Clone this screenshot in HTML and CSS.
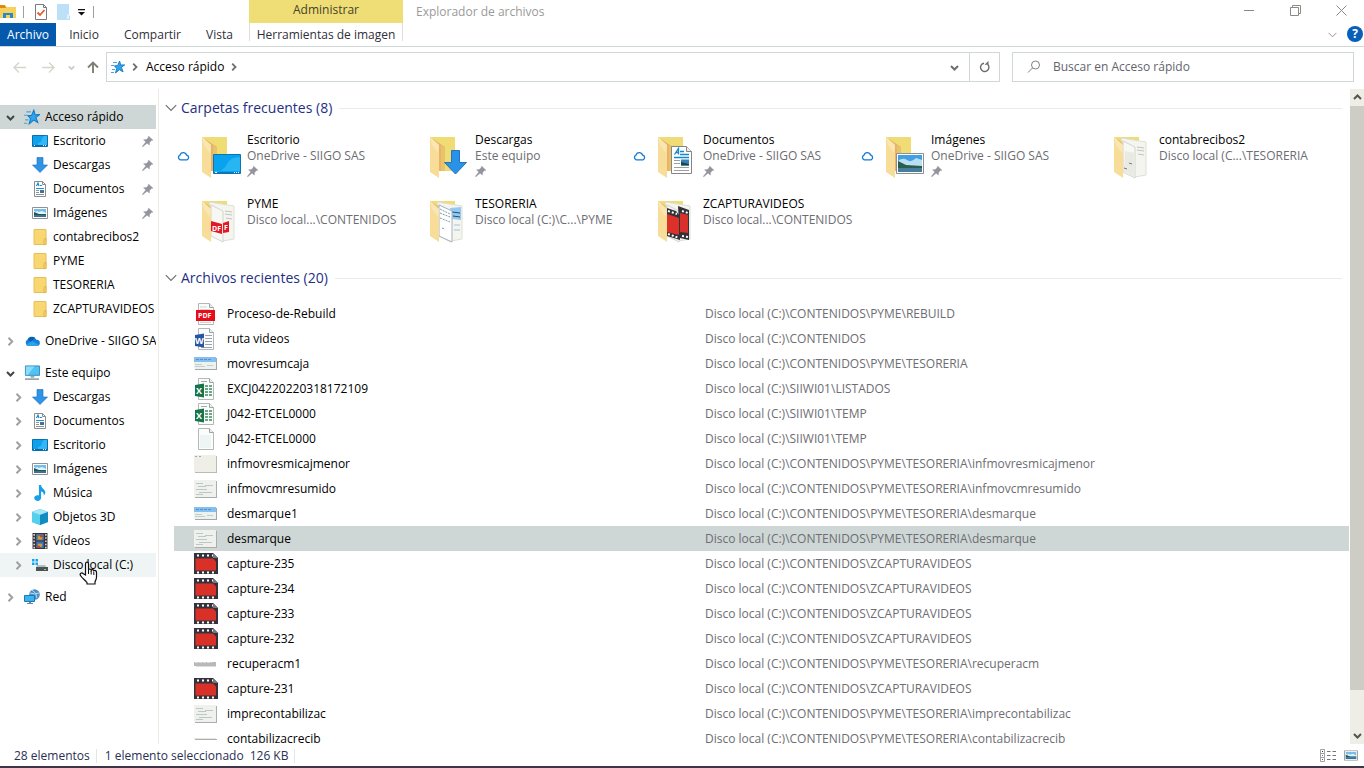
FILE: index.html
```html
<!DOCTYPE html>
<html lang="es">
<head>
<meta charset="utf-8">
<title>Explorador de archivos</title>
<link rel="stylesheet" href="styles.css">
</head>
<body>
<svg class="sprite" aria-hidden="true">
  <symbol id="star" viewBox="0 0 14 14"><path d="M8.600 1l1.100 4 4-.1-3.300 2.400 1.700 4.600-3.600-2.200-4 3.300 1.200-4.600-2.300-2.500 3.300-.4z" fill="#2aa5ee" stroke="#1477c4" stroke-width=".9"/><path d="M2 2.500h4M0 5.500h3M1 9.500h3M0 12.500h3" stroke="#4aa3dc"/></symbol>
  <symbol id="down" viewBox="0 0 9 9"><path d="M1 3l3.500 3.500L8 3" fill="none" stroke="currentColor" stroke-width="2"/></symbol>
  <symbol id="thin-down" viewBox="0 0 12 8"><path d="M.8 1.200L6 6.400l5.200-5.200" fill="none" stroke="currentColor" stroke-width="1.200"/></symbol>
  <symbol id="right" viewBox="0 0 9 9"><path d="M2.500.800l3.700 3.700-3.700 3.700" fill="none" stroke="currentColor" stroke-width="2"/></symbol>
  <symbol id="pin" viewBox="0 0 11 11"><path d="M6.500 0L11 4.300l-1.600.3-1.800 2-.2 2.500L5 7.200.8 10.800l-.6-.4L3.800 6 1.500 3.800l2.700-.2 2-1.900z" fill="#94949f" stroke="#94949f" stroke-width=".4"/></symbol>
  <symbol id="desktop" viewBox="0 0 16 12"><path d="M.5.5h15v11H.500z" fill="#0da1ee" stroke="#0b6fae"/><path d="M6 8q3 0 4-4t5-3v9H6z" fill="#33b7f5"/><path d="M1 10.500h14" stroke="#0866a3"/><path d="M2 10.500h1M11 10.500h1M13 10.500h1" stroke="#fff"/></symbol>
  <symbol id="arrow" viewBox="0 0 16 16"><path d="M5 .5h6V8h4.500L8 15.500.500 8H5z" fill="#2f93e6" stroke="#2875c0" stroke-width=".7"/></symbol>
  <symbol id="doc" viewBox="0 0 12 16"><path d="M.5.5h8l3 3v12H.500z" fill="#fff" stroke="#8c8c8c"/><path d="M8.500.5v3h3" fill="none" stroke="#8c8c8c"/><path d="M2.500 5L4 2l1 3M6 4.500h2M2 7.500h8" fill="none" stroke="#1c8cd2" stroke-width="1.200"/><path d="M2 9.500h3M2 11.500h3M2 13.500h8" stroke="#8a9298"/><path d="M6 9h4v3H6z" fill="#47728f"/></symbol>
  <symbol id="image" viewBox="0 0 16 12"><path d="M.5.5h15v11H.500z" fill="#fff" stroke="#919191"/><path d="M2 2h12v8H2z" fill="#78bce9"/><path d="M2 4l2 1 1-1 2 1 3-1 4 2v1H2z" fill="#e4f4fb"/><path d="M2 5l5 2h7v1H2z" fill="#24594f"/><path d="M2 8h12v2H2z" fill="#3a719c"/></symbol>
  <symbol id="folder" viewBox="0 0 13 16"><path d="M.5.500h12v15H.500z" fill="#f8d670" stroke="#e7c05b"/><path d="M10.500 15.500v-5l2-1.500v6.500z" fill="#f9df8c" stroke="#dfb13e"/></symbol>
  <symbol id="cloud-solid" viewBox="0 0 16 10"><path d="M4 10a3.500 3.500 0 0 1-.3-6.500A5 5 0 0 1 12.500 3.800 3 3 0 0 1 13 10z" fill="#1680d8"/><path d="M3.500 3.500A5 5 0 0 1 11 1.700L7 6z" fill="#0b5fae"/><path d="M2 9l6-4 7 4-2 1H4z" fill="#2ba3ec"/></symbol>
  <symbol id="pc" viewBox="0 0 17 16"><path d="M1.500.500h15v10h-15z" fill="#4dc3f6" stroke="#3b86b5"/><path d="M2 1h9L4 10H2z" fill="#8bdcfb"/><path d="M7 11h4v2H7z" fill="#92a9b6"/><path d="M1 14.500h15" stroke="#7f919c" stroke-width="1.500"/></symbol>
  <symbol id="music" viewBox="0 0 12 15"><path d="M5 0h2c0 3 4 4 4 7 0 1-.5 2-1.500 3C10 7 8 6 7 6v6a3.200 2.700 0 1 1-2-2.300z" fill="#18a0e6"/></symbol>
  <symbol id="cube" viewBox="0 0 16 16"><path d="M0 3l8-3 8 3v10l-8 3-8-3z" fill="#1ab0dc"/><path d="M0 3l8 3v10l-8-3z" fill="#54d0ec"/><path d="M0 3l8-3 8 3-8 3z" fill="#a4e6f5"/><path d="M8 6l8-3v10l-8 3z" fill="#128cc0"/></symbol>
  <symbol id="video" viewBox="0 0 14 15"><path d="M0 0h14v15H0z" fill="#34343a"/><path d="M3.500 1h7v6h-7z" fill="#56799c"/><path d="M3.500 8h7v6h-7z" fill="#3a75bc"/><path d="M5 3h4v3H5zM5 10h4v3H5z" fill="#d99b34"/><path d="M7 2h3v2H7zM4 12h3v2H4z" fill="#b04738"/><path d="M1.500 1v14M12.500 1v14" stroke="#fff" stroke-width="1.200" stroke-dasharray="1.500 1.500"/></symbol>
  <symbol id="disk" viewBox="0 0 16 14"><path d="M0 1h2.500v2.500H0zM3.500 1H6v2.500H3.500zM0 4.500h2.500V7H0zM3.500 4.500H6V7H3.500z" fill="#15a3ef"/><path d="M5 7h8l2 3H4z" fill="#b8bdc0"/><path d="M4 9h12v4H4z" fill="#4c5256"/><path d="M12 11.500h2" stroke="#69e070"/></symbol>
  <symbol id="net" viewBox="0 0 16 16"><circle cx="10.500" cy="5.500" r="5.300" fill="#4d8ec6"/><path d="M8 1q5 3 5 8M6 4q5 2 9 0" stroke="#b9dcf0" fill="none"/><path d="M.500 6.500h10v6H.500z" fill="#38b4f0" stroke="#2178b1"/><path d="M5 13h2v1h2v1H3v-1h2z" fill="#6c8798"/></symbol>
  <symbol id="cloud" viewBox="0 0 13 10"><path d="M3.200 8.800a2.500 2.500 0 0 1-.2-4.700A3.400 3.400 0 0 1 9.500 4a2.500 2.500 0 0 1 .5 4.800z" fill="#fff" stroke="#1179d6" stroke-width="1.300"/></symbol>
  <symbol id="folder-back" viewBox="0 0 40 44"><path d="M0 1h25v34H8z" fill="#efdc75"/><path d="M3 3l12 8v24H8z" fill="#eab266"/><path d="M11 9l4 3v23h-4z" fill="#e8c36c"/></symbol>
  <symbol id="folder-front" viewBox="0 0 40 44"><path d="M0 1l9 8v33l-9-6z" fill="#f8dd98"/><path d="M0 1l9 8-1 8L2 9z" fill="#fae6b2"/></symbol>
  <symbol id="big-plain" viewBox="0 0 40 44"><use href="#folder-back" width="40" height="44"/><use href="#folder-front" width="40" height="44"/></symbol>
  <symbol id="big-desktop" viewBox="0 0 40 44"><use href="#big-plain" width="40" height="44"/><path d="M11.500 18.500h27v19h-27z" fill="#08a2ef" stroke="#0b75b3"/><path d="M12 37q10-2 13-9t13-7v14H12z" fill="#27b5f3"/><path d="M12 36.500h26" stroke="#0a79b8"/><path d="M13 36.500h2M32 36.500h1M34 36.500h1M36 36.500h1" stroke="#fff"/></symbol>
  <symbol id="big-down" viewBox="0 0 40 44"><use href="#big-plain" width="40" height="44"/><path d="M21.500 14.500h8v12h7L25.500 38l-11-11.500h7z" fill="#2892e8" stroke="#2373bd"/></symbol>
  <symbol id="big-doc" viewBox="0 0 40 44"><use href="#big-plain" width="40" height="44"/><path d="M13.500 10.500h15l5 5v22h-20z" fill="#fff" stroke="#858585"/><path d="M28.500 10.500v5h5" fill="#eee" stroke="#858585"/><path d="M16.500 18.500l4-6v6m-3-2h3M22 15.500h4M22 18.500h9M16 21.500h15" fill="none" stroke="#1488cf" stroke-width="1.300"/><path d="M16 24.500h6M16 27.500h6M16 31.500h15M16 34.500h15" stroke="#9ba0a3"/><path d="M23 23.500h8v6h-8z" fill="#3a80bd"/><path d="M23 26l8 2v1.500h-8z" fill="#1b4843"/></symbol>
  <symbol id="big-image" viewBox="0 0 40 44"><use href="#big-plain" width="40" height="44"/><path d="M10.500 17.500h27v20h-27z" fill="#fff" stroke="#8c9092"/><path d="M12 19h24v17H12z" fill="#429fe3"/><path d="M12 25q5-4 9-1t9-2l6 2v6H12z" fill="#b9e0f2"/><path d="M12 25l8 4 16 1v2H12z" fill="#2b5d4b"/><path d="M12 32h24v4H12z" fill="#477e9d"/></symbol>
  <symbol id="pages" viewBox="0 0 40 44"><path d="M7 2l25 4v33l-11 2z" fill="#f5f5f0" stroke="#dedfd7"/><path d="M9 5l12 6v31L9 36z" fill="#f7f7f4" stroke="#d4d5ce"/><path d="M23 11l7 1M23 14l7 1M24 18l6 1" stroke="#bfc2c0"/></symbol>
  <symbol id="big-papers" viewBox="0 0 40 44"><use href="#folder-back" width="40" height="44"/><use href="#pages" width="40" height="44"/><path d="M11 15l10 2v24l-11-6z" fill="#eaeae4"/><path d="M15 27l3 1M10 32l3 1" stroke="#777"/><use href="#folder-front" width="40" height="44"/></symbol>
  <symbol id="big-pdf" viewBox="0 0 40 44"><use href="#folder-back" width="40" height="44"/><use href="#pages" width="40" height="44"/><path d="M9 21l11 3v10L9 31zM21 23l6-2v11l-6 1z" fill="#e31825"/><use href="#folder-front" width="40" height="44"/></symbol>
  <symbol id="big-sheet" viewBox="0 0 40 44"><use href="#folder-back" width="40" height="44"/><use href="#pages" width="40" height="44"/><path d="M20 8l11-1v13l-9-1z" fill="#93caf4"/><path d="M22 12l8 1M23 16l7 1" stroke="#2a4866"/><path d="M9 5l13 6v31L9 36z" fill="#fff" stroke="#a5b4bd"/><path d="M10 9l10 5M10 13l10 4M10 18l10 4M12 28l3 1" stroke="#819aa9" stroke-dasharray="2 1"/><path d="M24 25h6M24 30h6" stroke="#9ec4df"/><use href="#folder-front" width="40" height="44"/></symbol>
  <symbol id="big-film" viewBox="0 0 40 44"><use href="#folder-back" width="40" height="44"/><use href="#pages" width="40" height="44"/><path d="M20 6l11 4v30l-9-2z" fill="#333139"/><path d="M22 13l8 2v18l-8-1z" fill="#d8312b"/><path d="M9 8l9 3 4 5v24L9 36z" fill="#333139"/><path d="M9 14l12 4v17L9 32z" fill="#dc3028"/><path d="M10 11l9 3M10 34l11 4M24 11l6 2M24 36l6 1" stroke="#fff" stroke-width="2" stroke-dasharray="2 2"/><use href="#folder-front" width="40" height="44"/></symbol>
  <symbol id="file" viewBox="0 0 24 24"><path d="M4.500 1.500h11l4 4v17h-15z" fill="#fbfcfc" stroke="#b4b7b5"/><path d="M15.500 1.500v4h4" fill="#eee" stroke="#9fa3a0"/></symbol>
  <symbol id="blank" viewBox="0 0 24 24"><use href="#file" width="24" height="24"/><path d="M6 8h11v13H6z" fill="#edf5f5"/></symbol>
  <symbol id="pdf" viewBox="0 0 24 24"><use href="#file" width="24" height="24"/><path d="M6 5h7M6 7.500h10M6 20.500h11" stroke="#d3d5cf"/><path d="M2 8h19v11H2z" fill="#e60c19"/></symbol>
  <symbol id="word" viewBox="0 0 24 24"><use href="#file" width="24" height="24"/><path d="M11 8.500h7M11 11.500h7M11 14.500h7M11 17.500h7M7 20.500h11" stroke="#9ba4b5"/><path d="M1 8l9-1.500v14L1 19z" fill="#2855a3"/></symbol>
  <symbol id="excel" viewBox="0 0 24 24"><use href="#file" width="24" height="24"/><path d="M7 4.500h6" stroke="#aaa"/><path d="M11 8h3v2h-3zM15 8h3v2h-3zM11 11h3v2h-3zM15 11h3v2h-3zM11 14h3v2h-3zM15 14h3v2h-3zM11 17h3v2h-3zM15 17h3v2h-3z" fill="#68aa88"/><path d="M1 8l9-1.500v14L1 19z" fill="#16734a"/></symbol>
  <symbol id="film" viewBox="0 0 24 24"><path d="M0 1h19l5 5v16H0z" fill="#34323c"/><path d="M1.500 6.500h17.500l3 3v9H1.500z" fill="#d93027"/><path d="M3 3.500h16M3 20.500h20" stroke="#fff" stroke-width="2" stroke-dasharray="2 3"/><path d="M19 1v5h5z" fill="#77777d"/></symbol>
  <symbol id="shot-blue" viewBox="0 0 24 24"><path d="M1 6h22v12H1z" fill="#9fa8aa"/><path d="M0 5h22v12H0z" fill="#edf2ef"/><path d="M0 5h22v5H0z" fill="#83bff0"/><path d="M2 7.500h16" stroke="#5c92c0" stroke-dasharray="3 1"/><path d="M1 12.500h7M1 14.500h10M13 13.500h6" stroke="#c2cecb"/></symbol>
  <symbol id="shot-plain" viewBox="0 0 24 24"><path d="M1 4h22v17H1z" fill="#b9bbb5"/><path d="M0 3h22v17H0z" fill="#efefe8"/><path d="M1 4.500h6" stroke="#90aebc" stroke-dasharray="2 2"/></symbol>
  <symbol id="shot-text" viewBox="0 0 24 24"><path d="M1 4h22v17H1z" fill="#a9adab"/><path d="M0 3h22v17H0z" fill="#f0f1ec"/><path d="M2 6.500h7M4 9.500h8M11 8.500h8M2 12.500h11M5 15.500h13M2 17.500h7" stroke="#bcc8c6"/></symbol>
  <symbol id="shot-strip" viewBox="0 0 24 24"><path d="M0 10h22v4H0z" fill="#b8b9b8"/><path d="M2 14.500h20" stroke="#ddd"/><path d="M1 10.500h17" stroke="#ddd" stroke-dasharray="3 1"/></symbol>
  <symbol id="shot-line" viewBox="0 0 24 24"><path d="M0 11h22v1H0z" fill="#e5e5dc"/><path d="M1 12h22v1H1z" fill="#aeb0ad"/></symbol>
</svg>

<header class="ribbon">
  <div class="quick">
    <svg class="app-icon" viewBox="0 0 16 14"><path d="M0 1h6l1 1h9v11H0z" fill="#f6d25b"/><path d="M0 0h5l1 3H0z" fill="#dd8b18"/><path d="M3 8h10v5h-3v-3H6v3H3z" fill="#2788d2"/></svg>
    <span class="tick"></span>
    <button class="plain props" aria-label="Propiedades"><svg width="12" height="16" viewBox="0 0 12 16"><path d="M.500.500h8l3 3v12H.500z" fill="#fff" stroke="#7a7a7a"/><path d="M8.500.500v3h3" fill="none" stroke="#7a7a7a"/><path d="M2.500 8.500l2.500 2.500 4.500-5" fill="none" stroke="#e35b29" stroke-width="1.800"/></svg></button>
    <button class="plain newf" aria-label="Nueva carpeta"><svg width="13" height="16" viewBox="0 0 13 16"><path d="M0 0h12v11l1 1v4H0z" fill="#bbe0f8"/><path d="M10 15v-4l2-1v5z" fill="#e4f3fb"/></svg></button>
    <button class="plain more" aria-label="Personalizar"><svg width="7" height="7" viewBox="0 0 7 7"><path d="M0 0h7v1.300H0zM0 3h7L3.500 6.500z" fill="#111"/></svg></button>
    <span class="tick"></span>
  </div>
  <div class="context-title">Administrar</div>
  <h1 class="window-title">Explorador de archivos</h1>
  <div class="window-buttons">
    <button class="plain" aria-label="Minimizar"><svg width="11" height="11" viewBox="0 0 11 11"><path d="M0 5.500h10" stroke="#8a8a84"/></svg></button>
    <button class="plain" aria-label="Restaurar"><svg width="11" height="11" viewBox="0 0 11 11"><path d="M.500 2.500h8v8h-8zM2.500 2.500v-2h8v8h-2" fill="none" stroke="#8a8a84"/></svg></button>
    <button class="plain" aria-label="Cerrar"><svg width="11" height="11" viewBox="0 0 11 11"><path d="M.500.500l10 10M10.500.500l-10 10" stroke="#8a8a84"/></svg></button>
  </div>
</header>
<nav class="tabs">
  <button class="plain tab tab-file">Archivo</button>
  <button class="plain tab tab-home">Inicio</button>
  <button class="plain tab tab-share">Compartir</button>
  <button class="plain tab tab-view">Vista</button>
  <button class="plain tab tab-tools">Herramientas de imagen</button>
  <button class="plain expand" aria-label="Expandir la cinta"><svg width="9" height="6" viewBox="0 0 12 8"><use href="#thin-down"/></svg></button>
  <button class="plain help" aria-label="Ayuda">?</button>
</nav>
<div class="toolbar">
  <div class="nav-buttons">
    <button class="plain" aria-label="Atrás"><svg width="13" height="11" viewBox="0 0 13 11"><path d="M13 5.500H1M6 .500l-5 5 5 5" fill="none" stroke="#d5d5cd" stroke-width="1.400"/></svg></button>
    <button class="plain" aria-label="Adelante"><svg width="13" height="11" viewBox="0 0 13 11"><path d="M0 5.500h12M7 .500l5 5-5 5" fill="none" stroke="#d5d5cd" stroke-width="1.400"/></svg></button>
    <button class="plain recent" aria-label="Ubicaciones recientes"><svg width="7" height="7" viewBox="0 0 9 9"><use href="#down"/></svg></button>
    <button class="plain" aria-label="Arriba"><svg width="12" height="12" viewBox="0 0 12 12"><path d="M6 12V1.500M1 6.500l5-5 5 5" fill="none" stroke="#7f7f78" stroke-width="1.900"/></svg></button>
  </div>
  <div class="address">
    <svg width="14" height="14"><use href="#star"/></svg>
    <svg class="crumb-arrow" width="8" height="8"><use href="#right"/></svg>
    <button class="plain crumb">Acceso rápido</button>
    <svg class="crumb-arrow" width="8" height="8"><use href="#right"/></svg>
    <button class="plain history" aria-label="Historial"><svg width="9" height="9"><use href="#down"/></svg></button>
    <button class="plain refresh" aria-label="Actualizar"><svg width="11" height="12" viewBox="0 0 11 12"><path d="M8.800 3.500A4.200 4.200 0 1 1 5 2.200" fill="none" stroke="#6b6b6b" stroke-width="1.400"/><path d="M5.500 3.800h4V0z" fill="#6b6b6b"/></svg></button>
  </div>
  <label class="search">
    <svg width="14" height="14" viewBox="0 0 14 14"><circle cx="8.500" cy="5" r="4" fill="none" stroke="#82827c"/><path d="M5.500 8L1 12.500" stroke="#82827c"/></svg>
    <input type="text" placeholder="Buscar en Acceso rápido" aria-label="Buscar en Acceso rápido">
  </label>
</div>

<div class="body">
  <nav class="tree">
    <ul>
      <li><a href="#" class="node current"><svg class="twist open"><use href="#down"/></svg><svg class="ico"><use href="#star"/></svg>Acceso rápido</a></li>
      <li><a href="#" class="node leaf"><svg class="ico"><use href="#desktop"/></svg>Escritorio<svg class="pin"><use href="#pin"/></svg></a></li>
      <li><a href="#" class="node leaf"><svg class="ico"><use href="#arrow"/></svg>Descargas<svg class="pin"><use href="#pin"/></svg></a></li>
      <li><a href="#" class="node leaf"><svg class="ico"><use href="#doc"/></svg>Documentos<svg class="pin"><use href="#pin"/></svg></a></li>
      <li><a href="#" class="node leaf"><svg class="ico"><use href="#image"/></svg>Imágenes<svg class="pin"><use href="#pin"/></svg></a></li>
      <li><a href="#" class="node leaf"><svg class="ico"><use href="#folder"/></svg>contabrecibos2</a></li>
      <li><a href="#" class="node leaf"><svg class="ico"><use href="#folder"/></svg>PYME</a></li>
      <li><a href="#" class="node leaf"><svg class="ico"><use href="#folder"/></svg>TESORERIA</a></li>
      <li><a href="#" class="node leaf"><svg class="ico"><use href="#folder"/></svg>ZCAPTURAVIDEOS</a></li>
    </ul>
    <ul>
      <li><a href="#" class="node"><svg class="twist"><use href="#right"/></svg><svg class="ico"><use href="#cloud-solid"/></svg>OneDrive - SIIGO SAS</a></li>
    </ul>
    <ul>
      <li><a href="#" class="node"><svg class="twist open"><use href="#down"/></svg><svg class="ico"><use href="#pc"/></svg>Este equipo</a></li>
      <li><a href="#" class="node child"><svg class="twist"><use href="#right"/></svg><svg class="ico"><use href="#arrow"/></svg>Descargas</a></li>
      <li><a href="#" class="node child"><svg class="twist"><use href="#right"/></svg><svg class="ico"><use href="#doc"/></svg>Documentos</a></li>
      <li><a href="#" class="node child"><svg class="twist"><use href="#right"/></svg><svg class="ico"><use href="#desktop"/></svg>Escritorio</a></li>
      <li><a href="#" class="node child"><svg class="twist"><use href="#right"/></svg><svg class="ico"><use href="#image"/></svg>Imágenes</a></li>
      <li><a href="#" class="node child"><svg class="twist"><use href="#right"/></svg><svg class="ico"><use href="#music"/></svg>Música</a></li>
      <li><a href="#" class="node child"><svg class="twist"><use href="#right"/></svg><svg class="ico"><use href="#cube"/></svg>Objetos 3D</a></li>
      <li><a href="#" class="node child"><svg class="twist"><use href="#right"/></svg><svg class="ico"><use href="#video"/></svg>Vídeos</a></li>
      <li><a href="#" class="node child hover"><svg class="twist"><use href="#right"/></svg><svg class="ico"><use href="#disk"/></svg>Disco local (C:)</a></li>
    </ul>
    <ul>
      <li><a href="#" class="node"><svg class="twist"><use href="#right"/></svg><svg class="ico"><use href="#net"/></svg>Red</a></li>
    </ul>
  </nav>

  <main class="content">
    <section class="group">
      <h2 class="group-title"><button class="plain"><svg width="12" height="8"><use href="#thin-down"/></svg>Carpetas frecuentes (8)</button></h2>
      <div class="tiles">
        <a href="#" class="tile"><svg class="cloud"><use href="#cloud"/></svg><svg class="big"><use href="#big-desktop"/></svg><span class="tile-text"><span class="tile-name">Escritorio</span><span>OneDrive - SIIGO SAS</span><svg class="pin"><use href="#pin"/></svg></span></a>
        <a href="#" class="tile"><span class="cloud"></span><svg class="big"><use href="#big-down"/></svg><span class="tile-text"><span class="tile-name">Descargas</span><span>Este equipo</span><svg class="pin"><use href="#pin"/></svg></span></a>
        <a href="#" class="tile"><svg class="cloud"><use href="#cloud"/></svg><svg class="big"><use href="#big-doc"/></svg><span class="tile-text"><span class="tile-name">Documentos</span><span>OneDrive - SIIGO SAS</span><svg class="pin"><use href="#pin"/></svg></span></a>
        <a href="#" class="tile"><svg class="cloud"><use href="#cloud"/></svg><svg class="big"><use href="#big-image"/></svg><span class="tile-text"><span class="tile-name">Imágenes</span><span>OneDrive - SIIGO SAS</span><svg class="pin"><use href="#pin"/></svg></span></a>
        <a href="#" class="tile"><span class="cloud"></span><svg class="big"><use href="#big-papers"/></svg><span class="tile-text"><span class="tile-name">contabrecibos2</span><span>Disco local (C...\TESORERIA</span></span></a>
        <a href="#" class="tile"><span class="cloud"></span><svg class="big" viewBox="0 0 40 44"><use href="#big-pdf" width="40" height="44"/><text class="icon-pdf" x="10" y="31">DF</text><text class="icon-pdf" x="22" y="30">F</text></svg><span class="tile-text"><span class="tile-name">PYME</span><span>Disco local...\CONTENIDOS</span></span></a>
        <a href="#" class="tile"><span class="cloud"></span><svg class="big"><use href="#big-sheet"/></svg><span class="tile-text"><span class="tile-name">TESORERIA</span><span>Disco local (C:)\C...\PYME</span></span></a>
        <a href="#" class="tile"><span class="cloud"></span><svg class="big"><use href="#big-film"/></svg><span class="tile-text"><span class="tile-name">ZCAPTURAVIDEOS</span><span>Disco local...\CONTENIDOS</span></span></a>
      </div>
    </section>
    <section class="group">
      <h2 class="group-title"><button class="plain"><svg width="12" height="8"><use href="#thin-down"/></svg>Archivos recientes (20)</button></h2>
      <table class="files">
        <tbody>
          <tr><td class="thumb"><svg><use href="#pdf"/><text class="icon-pdf" x="4" y="16">PDF</text></svg></td><td class="name">Proceso-de-Rebuild</td><td>Disco local (C:)\CONTENIDOS\PYME\REBUILD</td></tr>
          <tr><td class="thumb"><svg><use href="#word"/><text class="icon-letter" x="1" y="17">W</text></svg></td><td class="name">ruta videos</td><td>Disco local (C:)\CONTENIDOS</td></tr>
          <tr><td class="thumb"><svg><use href="#shot-blue"/></svg></td><td class="name">movresumcaja</td><td>Disco local (C:)\CONTENIDOS\PYME\TESORERIA</td></tr>
          <tr><td class="thumb"><svg><use href="#excel"/><text class="icon-letter" x="2" y="17">X</text></svg></td><td class="name">EXCJ04220220318172109</td><td>Disco local (C:)\SIIWI01\LISTADOS</td></tr>
          <tr><td class="thumb"><svg><use href="#excel"/><text class="icon-letter" x="2" y="17">X</text></svg></td><td class="name">J042-ETCEL0000</td><td>Disco local (C:)\SIIWI01\TEMP</td></tr>
          <tr><td class="thumb"><svg><use href="#blank"/></svg></td><td class="name">J042-ETCEL0000</td><td>Disco local (C:)\SIIWI01\TEMP</td></tr>
          <tr><td class="thumb"><svg><use href="#shot-plain"/></svg></td><td class="name">infmovresmicajmenor</td><td>Disco local (C:)\CONTENIDOS\PYME\TESORERIA\infmovresmicajmenor</td></tr>
          <tr><td class="thumb"><svg><use href="#shot-text"/></svg></td><td class="name">infmovcmresumido</td><td>Disco local (C:)\CONTENIDOS\PYME\TESORERIA\infmovcmresumido</td></tr>
          <tr><td class="thumb"><svg><use href="#shot-blue"/></svg></td><td class="name">desmarque1</td><td>Disco local (C:)\CONTENIDOS\PYME\TESORERIA\desmarque</td></tr>
          <tr class="selected"><td class="thumb"><svg><use href="#shot-text"/></svg></td><td class="name">desmarque</td><td>Disco local (C:)\CONTENIDOS\PYME\TESORERIA\desmarque</td></tr>
          <tr><td class="thumb"><svg><use href="#film"/></svg></td><td class="name">capture-235</td><td>Disco local (C:)\CONTENIDOS\ZCAPTURAVIDEOS</td></tr>
          <tr><td class="thumb"><svg><use href="#film"/></svg></td><td class="name">capture-234</td><td>Disco local (C:)\CONTENIDOS\ZCAPTURAVIDEOS</td></tr>
          <tr><td class="thumb"><svg><use href="#film"/></svg></td><td class="name">capture-233</td><td>Disco local (C:)\CONTENIDOS\ZCAPTURAVIDEOS</td></tr>
          <tr><td class="thumb"><svg><use href="#film"/></svg></td><td class="name">capture-232</td><td>Disco local (C:)\CONTENIDOS\ZCAPTURAVIDEOS</td></tr>
          <tr><td class="thumb"><svg><use href="#shot-strip"/></svg></td><td class="name">recuperacm1</td><td>Disco local (C:)\CONTENIDOS\PYME\TESORERIA\recuperacm</td></tr>
          <tr><td class="thumb"><svg><use href="#film"/></svg></td><td class="name">capture-231</td><td>Disco local (C:)\CONTENIDOS\ZCAPTURAVIDEOS</td></tr>
          <tr><td class="thumb"><svg><use href="#shot-text"/></svg></td><td class="name">imprecontabilizac</td><td>Disco local (C:)\CONTENIDOS\PYME\TESORERIA\imprecontabilizac</td></tr>
          <tr><td class="thumb"><svg><use href="#shot-line"/></svg></td><td class="name">contabilizacrecib</td><td>Disco local (C:)\CONTENIDOS\PYME\TESORERIA\contabilizacrecib</td></tr>
        </tbody>
      </table>
    </section>
  </main>
  <div class="scrollbar">
    <button class="plain" aria-label="Subir"><svg class="flip" width="9" height="9"><use href="#down"/></svg></button>
    <div class="track"><div class="thumb-bar"></div></div>
    <button class="plain" aria-label="Bajar"><svg width="9" height="9"><use href="#down"/></svg></button>
  </div>
</div>

<footer class="status">
  <span class="cell">28 elementos</span>
  <span class="cell cell-wide">1 elemento seleccionado<span>126 KB</span></span>
  <div class="views">
    <button class="plain" aria-label="Detalles"><svg width="17" height="13" viewBox="0 0 17 13"><path d="M.500.500h4v12h-4zM.500 4.500h4M.500 8.500h4" fill="#fff" stroke="#a2a2a6"/><path d="M7 2.500h3.500M12.500 2.500H16M7 6.500h3.500M12.500 6.500H16M7 10.500h3.500M12.500 10.500H16" stroke="#77737b"/><path d="M2 2h1v1H2z" fill="#333"/><path d="M2 6h1v1H2z" fill="#2b8bd0"/><path d="M2 10h1v1H2z" fill="#d32424"/></svg></button>
    <button class="plain" aria-label="Iconos grandes"><svg width="14" height="11" viewBox="0 0 16 12"><use href="#image"/></svg></button>
  </div>
</footer>
<svg class="cursor" viewBox="0 0 20 25" aria-hidden="true"><path d="M6.500 14V3c0-2.500 3-2.500 3 0v6c.5-1.500 2.500-1.300 2.700.3.700-1 2.300-.8 2.600.6.800-.8 2.700-.5 2.700 1.400v5c0 2-.8 3-1.500 4.500V23h-8v-1.500C6 19 3 17 1.500 14.500c-1.200-2 1.200-3.200 2.500-2z" fill="#fff" stroke="#111" stroke-width="1.200"/><path d="M9.500 9v4M12.200 10v3.500M14.800 11v3" stroke="#111"/></svg>
</body>
</html>
```
FILE: styles.css
```css
* { box-sizing: border-box; }

body {
  margin: 0;
  height: 100vh;
  display: flex;
  flex-direction: column;
  overflow: hidden;
  background: #fff;
  color: #000;
  font: 12px/16px "Open Sans", "Noto Sans", sans-serif;
  border-bottom: 2px solid #3f3548;
}

.sprite { position: absolute; width: 0; height: 0; }
svg { display: block; flex: none; }
a { color: inherit; text-decoration: none; }
ul { list-style: none; margin: 0; padding: 0; }

.plain {
  border: 0;
  padding: 0;
  background: none;
  color: inherit;
  font: inherit;
  display: flex;
  align-items: center;
  justify-content: center;
  flex: none;
}

.icon-pdf { font: bold 7px "Open Sans", sans-serif; fill: #fff; }
.icon-letter { font: bold 9px "Open Sans", sans-serif; fill: #fff; }

/* Title bar */
.ribbon { display: flex; height: 23px; flex: none; }
.quick { width: 249px; display: flex; align-items: center; }
.app-icon { width: 16px; height: 14px; }
.tick { width: 1px; height: 12px; margin-left: 7px; background: #a0a09a; }
.props { margin-left: 11px; }
.newf { margin-left: 10px; }
.more { margin: 2px 1px 0 8px; }
.context-title {
  width: 154px;
  background: #efde76;
  color: #44442c;
  text-align: center;
  line-height: 20px;
}
.window-title {
  margin: 0 0 0 13px;
  font: inherit;
  line-height: 24px;
  color: #9a9a98;
}
.window-buttons { margin-left: auto; display: flex; height: 20px; gap: 35px; padding-right: 17px; }

/* Ribbon tabs */
.tabs {
  display: flex;
  height: 24px;
  flex: none;
  border-bottom: 1px solid #cfd8d6;
  color: #2f2f3a;
}
.tab-file { width: 56px; background: #0459ad; color: #fff; }
.tab-home { width: 56px; }
.tab-share { width: 81px; }
.tab-view { width: 53px; }
.tab-tools { width: 154px; margin-left: 3px; height: 18px; margin-bottom: 5px; padding-top: 6px; border: solid #e0e0da; border-width: 0 1px; }
.expand { margin-left: auto; color: #88888a; }
.help {
  width: 16px;
  height: 16px;
  margin: 3px 1px 0 10px;
  border-radius: 50%;
  background: #075fb8;
  color: #fff;
  font-weight: bold;
}

/* Address row */
.toolbar { display: flex; align-items: flex-start; height: 42px; flex: none; padding: 5px 10px 0 0; }
.nav-buttons { width: 106px; height: 30px; display: flex; align-items: center; padding-left: 13px; gap: 16px; }
.nav-buttons .recent { color: #c9c9c4; margin: 0 -4px 0 -3px; }
.address {
  flex: 1;
  display: flex;
  align-items: center;
  height: 30px;
  border: 1px solid #cfd8d6;
  padding-left: 4px;
}
.crumb-arrow { color: #6e6e6e; margin: 0 7px 0 6px; }
.history { margin-left: auto; width: 29px; color: #6e6e6e; }
.refresh { width: 30px; height: 28px; border-left: 1px solid #cfd8d6; }
.search {
  width: 342px;
  height: 30px;
  margin-left: 12px;
  border: 1px solid #cfd8d6;
  display: flex;
  align-items: center;
  gap: 12px;
  padding-left: 14px;
}
.search input { flex: 1; min-width: 0; border: 0; padding: 0; outline: 0; background: none; font: inherit; }
.search input::placeholder { color: #63636b; opacity: 1; }

/* Main area */
.body { flex: 1; min-height: 0; display: flex; }

.tree { width: 159px; flex: none; padding: 16px 2px 0 0; border-right: 1px solid #ecece4; overflow: hidden; }
.tree ul + ul { margin-top: 8px; }
.node {
  display: flex;
  align-items: center;
  height: 24px;
  padding-left: 6px;
  white-space: nowrap;
  overflow: hidden;
}
.node.leaf { padding-left: 32px; }
.node.child { padding-left: 14px; }
.node.current { background: #ced7d5; }
.node.hover { background: #eef5f4; }
.twist { width: 9px; height: 9px; color: #a0a0a0; margin-right: 9px; }
.twist.open { color: #444; }
.ico { width: 16px; height: 16px; margin-right: 5px; }
.pin { width: 11px; height: 11px; }
.node .pin { margin-left: auto; margin-right: 3px; }

.content { flex: 1; min-width: 0; overflow: hidden; padding: 9px 1px 0 15px; }
.group + .group { margin-top: 8px; }
.group-title {
  margin: 0 7px 0 -9px;
  display: flex;
  align-items: center;
  gap: 7px;
  font: 14px/20px "Open Sans", "Noto Sans", sans-serif;
  color: #1f2f85;
}
.group-title::after { content: ""; flex: 1; height: 1px; background: #ebebe4; }
.group-title .plain { gap: 4px; }
.group-title svg { color: #6f6f76; }

.tiles { display: grid; grid-template-columns: repeat(auto-fill, 228px); grid-auto-rows: 64px; padding-top: 14px; }
.tile { display: flex; color: #6d6d72; }
.cloud { width: 13px; height: 10px; margin: 19px 12px 0 3px; flex: none; }
.big { width: 40px; height: 44px; margin: 4px 5px 0 0; }
.tile-text { display: flex; flex-direction: column; white-space: nowrap; }
.tile-name { color: #000; }
.tile-text .pin { margin-top: 2px; }

.files { width: 100%; table-layout: fixed; border-collapse: collapse; margin-top: 13px; color: #6d6d72; }
.files td { height: 25px; padding: 0; white-space: nowrap; }
.files .thumb { width: 53px; padding-left: 20px; }
.files .thumb svg { width: 24px; height: 24px; }
.files .name { width: 478px; color: #000; }
.files .selected { background: #ced7d5; }

.scrollbar { width: 14px; flex: none; display: flex; flex-direction: column; background: #eeeee7; color: #55554f; }
.scrollbar .plain { height: 17px; }
.flip { transform: rotate(180deg); }
.track { flex: 1; }
.thumb-bar { height: 94%; background: #cdcdc5; }

/* Status bar */
.status { display: flex; align-items: center; height: 22px; flex: none; padding: 1px 6px 0 14px; color: #2b2f52; }
.cell { padding-right: 6px; margin-right: 8px; border-right: 1px solid #e6e6e0; line-height: 14px; }
.cell-wide { display: flex; gap: 6px; }
.views { margin-left: auto; display: flex; gap: 7px; }

.cursor { position: absolute; left: 79px; top: 561px; width: 20px; height: 25px; }
```
